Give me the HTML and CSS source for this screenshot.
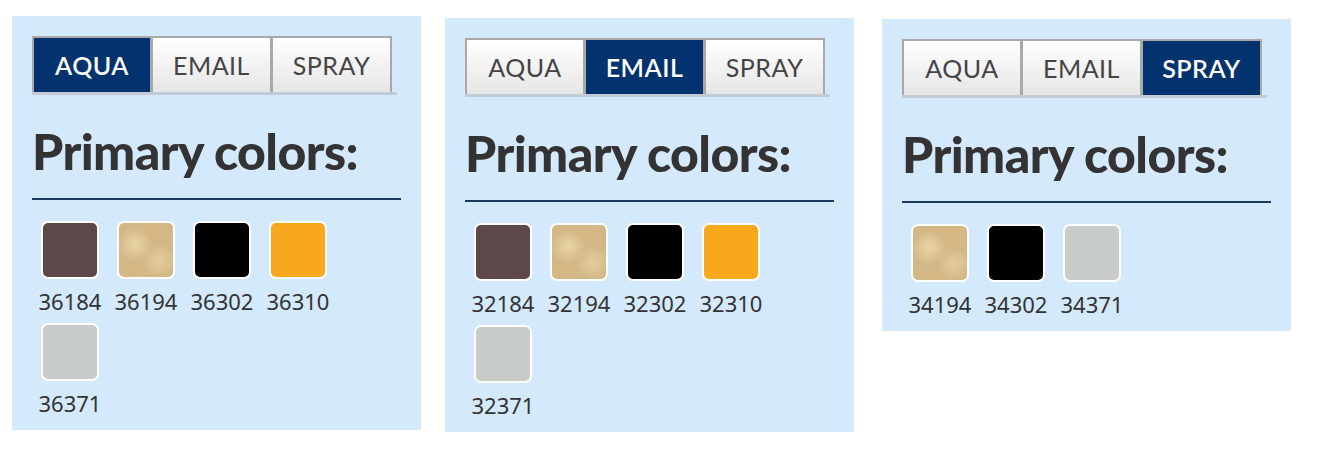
FILE: index.html
```html
<!DOCTYPE html>
<html lang="en">
<head>
    <meta charset="UTF-8">
    <title>Primary colors</title>
    <link rel="stylesheet" href="styles.css">
</head>
<body>
    <div class="panels">
        <div class="panel panel-a">
            <div class="tabs">
                <div class="tab active">AQUA</div>
                <div class="tab">EMAIL</div>
                <div class="tab">SPRAY</div>
            </div>
            <h2 class="title">Primary colors:</h2>
            <div class="swatches">
                <div class="swatch"><span class="chip brown"></span><span class="code">36184</span></div>
                <div class="swatch"><span class="chip sand"></span><span class="code">36194</span></div>
                <div class="swatch"><span class="chip black"></span><span class="code">36302</span></div>
                <div class="swatch"><span class="chip orange"></span><span class="code">36310</span></div>
                <div class="swatch"><span class="chip grey"></span><span class="code">36371</span></div>
            </div>
        </div>

        <div class="panel panel-b">
            <div class="tabs">
                <div class="tab">AQUA</div>
                <div class="tab active">EMAIL</div>
                <div class="tab">SPRAY</div>
            </div>
            <h2 class="title">Primary colors:</h2>
            <div class="swatches">
                <div class="swatch"><span class="chip brown"></span><span class="code">32184</span></div>
                <div class="swatch"><span class="chip sand"></span><span class="code">32194</span></div>
                <div class="swatch"><span class="chip black"></span><span class="code">32302</span></div>
                <div class="swatch"><span class="chip orange"></span><span class="code">32310</span></div>
                <div class="swatch"><span class="chip grey"></span><span class="code">32371</span></div>
            </div>
        </div>

        <div class="panel panel-c">
            <div class="tabs">
                <div class="tab">AQUA</div>
                <div class="tab">EMAIL</div>
                <div class="tab active">SPRAY</div>
            </div>
            <h2 class="title">Primary colors:</h2>
            <div class="swatches">
                <div class="swatch"><span class="chip sand"></span><span class="code">34194</span></div>
                <div class="swatch"><span class="chip black"></span><span class="code">34302</span></div>
                <div class="swatch"><span class="chip grey"></span><span class="code">34371</span></div>
            </div>
        </div>
    </div>
</body>
</html>
```

FILE: styles.css
```css
* {
    box-sizing: border-box;
    margin: 0;
    padding: 0;
}
body {
    background: #fff;
    font-family: Lato, "Liberation Sans", sans-serif;
}
.panels {
    display: flex;
    align-items: flex-start;
    gap: 24px;
    padding: 16px 12px;
}
.panel {
    width: 409px;
    background: #d4e9fc;
    padding: 20px 20px 5px 20px;
}
.panel-b {
    margin-top: 2px;
}
.panel-c {
    margin-top: 3px;
    margin-left: 4px;
}

/* Tabs */
.tabs {
    display: flex;
    width: 365px;
    border-bottom: 3px solid #c3ccd6;
}
.tab {
    width: 120px;
    height: 56px;
    display: flex;
    align-items: center;
    justify-content: center;
    font-size: 25px;
    letter-spacing: 0.5px;
    color: #444;
    background: linear-gradient(to bottom, #ffffff, #e6e6e6);
    border: 2px solid #a9a9a9;
    border-left-width: 1px;
    border-bottom: none;
}
.tab:first-child {
    border-left-width: 2px;
}
.tab:nth-child(3) {
    border-right-width: 2px;
}
.tab.active {
    background: #02336e;
    color: #fff;
    font-weight: 600;
}

/* Heading */
.title {
    font-size: 50px;
    font-weight: 900;
    letter-spacing: -0.6px;
    white-space: nowrap;
    color: #333;
    line-height: 50px;
    padding: 31px 0 22px 0;
    border-bottom: 2px solid #1b3a60;
}

/* Swatches */
.swatches {
    display: flex;
    flex-wrap: wrap;
    width: 304px;
    padding-top: 21px;
}
.swatch {
    width: 76px;
    display: flex;
    flex-direction: column;
    align-items: center;
    margin-bottom: 7px;
}
.chip {
    width: 58px;
    height: 58px;
    margin-bottom: 7px;
    border: 2px solid #fff;
    border-radius: 7px;
}
.code {
    font-family: "Noto Sans", sans-serif;
    font-size: 22px;
    line-height: 30px;
    color: #333;
}
.brown { background: #5c4849; }
.black { background: #000; }
.orange { background: #f7a81d; }
.grey { background: #c7ccc8; }
.sand {
    background:
        radial-gradient(circle at 30% 40%, rgba(240, 220, 175, 0.8), transparent 35%),
        radial-gradient(circle at 75% 70%, rgba(235, 215, 170, 0.7), transparent 30%),
        #d3b886;
}
```
